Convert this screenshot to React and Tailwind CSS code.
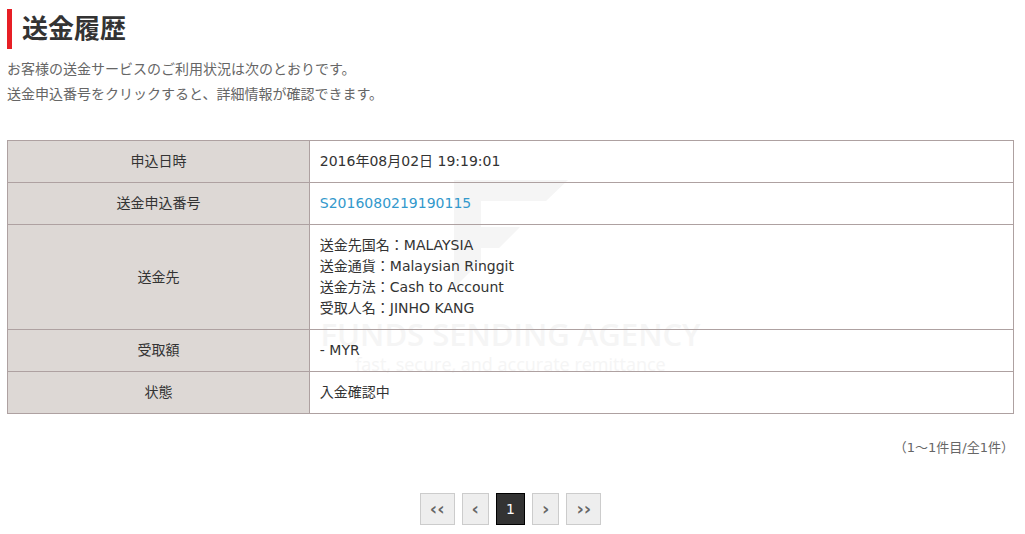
import { clsx } from "clsx";

const ROWS = [
  { label: "申込日時", value: "2016年08月02日 19:19:01" },
  {
    label: "送金申込番号",
    value: (
      <a href="#detail" className="text-[#3399cc] hover:underline">
        S2016080219190115
      </a>
    ),
  },
  {
    label: "送金先",
    value: (
      <>
        送金先国名：MALAYSIA
        <br />
        送金通貨：Malaysian Ringgit
        <br />
        送金方法：Cash to Account
        <br />
        受取人名：JINHO KANG
      </>
    ),
  },
  { label: "受取額", value: "- MYR" },
  { label: "状態", value: "入金確認中" },
];

const PAGES = [
  { text: "‹‹", label: "最初のページ" },
  { text: "‹", label: "前のページ" },
  { text: "1", label: "1ページ", current: true },
  { text: "›", label: "次のページ" },
  { text: "››", label: "最後のページ" },
];

function Watermark() {
  return (
    <div
      aria-hidden="true"
      className="absolute inset-x-0 top-10 -z-10 flex flex-col items-center font-['Open_Sans','Noto_Sans',sans-serif] text-[#f5f5f5] select-none"
    >
      <svg width="114" height="108" viewBox="0 0 114 108" fill="currentColor">
        <path d="M0 0H114L92 21H27V47H66L45 68H27V81L0 108Z" />
      </svg>
      <p className="mt-7 text-[31px] leading-9 font-semibold whitespace-nowrap">FUNDS SENDING AGENCY</p>
      <p className="text-lg leading-6 whitespace-nowrap">fast, secure, and accurate remittance</p>
    </div>
  );
}

export default function App() {
  return (
    <main className="relative isolate bg-white pt-[9px] pr-[11px] pb-2 pl-[7px] font-['DejaVu_Sans','Noto_Sans_CJK_JP',sans-serif] text-sm text-[#333]">
      <h1 className="border-l-5 border-[#e71f25] pl-[10px] text-[26px] leading-10 font-bold">送金履歴</h1>

      <p className="mt-2 leading-[25px] text-[#666]">
        お客様の送金サービスのご利用状況は次のとおりです。
        <br />
        送金申込番号をクリックすると、詳細情報が確認できます。
      </p>

      <div className="relative isolate mt-[33px]">
        <Watermark />
        <table className="w-full border-collapse leading-[21px]">
          <tbody>
            {ROWS.map((row) => (
              <tr key={row.label}>
                <th scope="row" className="w-[30%] border border-[#aea1a1] bg-[#ddd8d5] p-[10px] font-normal">
                  {row.label}
                </th>
                <td className="border border-[#aea1a1] p-[10px]">{row.value}</td>
              </tr>
            ))}
          </tbody>
        </table>
      </div>

      <p className="mt-6 text-right text-[13px] leading-5 text-[#666]">（1～1件目/全1件）</p>

      <nav aria-label="ページ送り" className="mt-[35px] flex justify-center gap-[7px]">
        {PAGES.map((page) => (
          <button
            key={page.label}
            type="button"
            aria-label={page.label}
            aria-current={page.current ? "page" : undefined}
            className={clsx(
              "flex h-8 items-center border px-[9px]",
              page.current
                ? "border-black bg-[#333] text-white"
                : "border-[#ccc] bg-[#eee] text-lg leading-6 font-bold text-[#666]"
            )}
          >
            {page.text}
          </button>
        ))}
      </nav>
    </main>
  );
}
